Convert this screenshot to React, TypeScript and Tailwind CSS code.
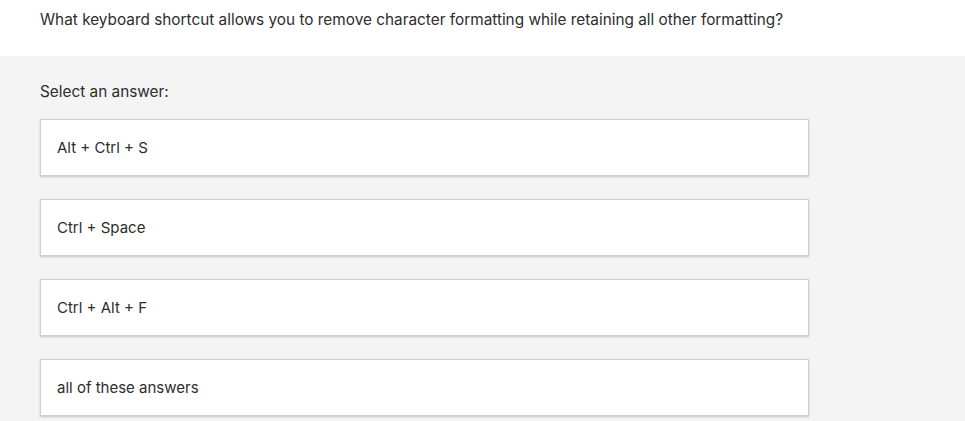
const answers = ["Alt + Ctrl + S", "Ctrl + Space", "Ctrl + Alt + F", "all of these answers"];

export default function App() {
  return (
    <div className="min-h-screen bg-[#f4f4f4] font-['Inter',sans-serif] text-[15px] text-[#2d2d2d]">
      <div className="h-[56px] bg-white px-10 pt-[10px]">
        <p className="text-[15.35px] leading-5">
          What keyboard shortcut allows you to remove character formatting while retaining all other formatting?
        </p>
      </div>
      <div className="px-10 pt-[26px]">
        <p className="mb-[17px] text-[15.35px] leading-5">Select an answer:</p>
        <div className="flex w-[769px] flex-col gap-[23px]">
          {answers.map((a) => (
            <div
              key={a}
              className="flex h-[57px] items-center border border-[#cfcfcf] bg-white px-4 pt-px shadow-[0_1px_2px_rgba(0,0,0,0.2)]"
            >
              {a}
            </div>
          ))}
        </div>
      </div>
    </div>
  );
}
